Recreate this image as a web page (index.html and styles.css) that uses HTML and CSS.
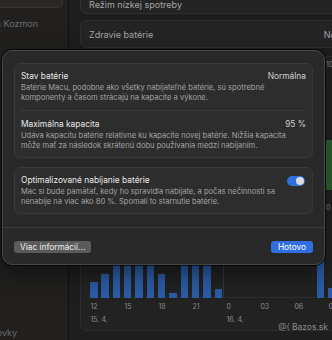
FILE: index.html
```html
<!DOCTYPE html>
<html lang="sk">
<head>
    <meta charset="UTF-8">
    <meta name="viewport" content="width=device-width, initial-scale=1.0">
    <link rel="stylesheet" href="styles.css">
    <title>Zdravie batérie</title>
</head>
<body>
    <div class="window">
        <aside class="sidebar">
            <div class="side-search"></div>
            <div class="side-user"><span>Lukáš Kozmon</span></div>
            <div class="side-bottom"><span>Šetrič obrazovky</span></div>
        </aside>

        <main class="main">
            <div class="row row-top"><span>Režim nízkej spotreby</span></div>
            <div class="row row-health"><span>Zdravie batérie</span><span>Normálna</span></div>

            <div class="charts">
                <div class="level">
                    <div class="level-plot"></div>
                    <div class="level-axis">
                        <span>100 %</span>
                        <div class="level-bars"></div>
                        <span class="level-zero">0 %</span>
                    </div>
                </div>

                <div class="usage">
                    <div class="slot"><div class="bar" style="height: 16px"></div></div>
                    <div class="slot"><div class="bar" style="height: 24px"></div></div>
                    <div class="slot"><div class="bar" style="height: 48px"></div></div>
                    <div class="slot"><div class="bar" style="height: 50px"></div></div>
                    <div class="slot"><div class="bar" style="height: 52px"></div></div>
                    <div class="slot"><div class="bar" style="height: 46px"></div></div>
                    <div class="slot"><div class="bar" style="height: 24px"></div></div>
                    <div class="slot"><div class="bar" style="height: 5px"></div></div>
                    <div class="slot"><div class="bar" style="height: 50px"></div></div>
                    <div class="slot"><div class="bar" style="height: 48px"></div></div>
                    <div class="slot"><div class="bar" style="height: 50px"></div></div>
                    <div class="slot"><div class="bar" style="height: 9px"></div></div>
                    <div class="slot day"></div>
                    <div class="slot"></div>
                    <div class="slot"></div>
                    <div class="slot"></div>
                    <div class="slot"></div>
                    <div class="slot"></div>
                    <div class="slot"></div>
                    <div class="slot"></div>
                    <div class="slot"><div class="bar" style="height: 44px"></div></div>
                    <div class="slot"><div class="bar" style="height: 10px"></div></div>
                    <div class="slot"><div class="bar" style="height: 30px"></div></div>
                    <div class="slot"><div class="bar" style="height: 20px"></div></div>

                    <span class="hour">12</span>
                    <span class="hour">15</span>
                    <span class="hour">18</span>
                    <span class="hour">21</span>
                    <span class="hour">0</span>
                    <span class="hour">03</span>
                    <span class="hour">06</span>
                    <span class="hour">09</span>

                    <span class="date">15. 4.</span>
                    <span class="date">16. 4.</span>
                </div>
            </div>
        </main>
    </div>

    <div class="watermark">@( Bazos.sk</div>

    <div class="modal">
        <div class="modal-body">
            <section class="group">
                <div class="item">
                    <div class="item-head">
                        <span class="item-title">Stav batérie</span>
                        <span class="item-value">Normálna</span>
                    </div>
                    <p class="item-desc">Batérie Macu, podobne ako všetky nabíjateľné batérie, sú spotrebné komponenty a časom strácajú na kapacite a výkone.</p>
                </div>
                <div class="item">
                    <div class="item-head">
                        <span class="item-title">Maximálna kapacita</span>
                        <span class="item-value">95 %</span>
                    </div>
                    <p class="item-desc">Udáva kapacitu batérie relatívne ku kapacite novej batérie. Nižšia kapacita môže mať za následok skrátenú dobu používania medzi nabíjaním.</p>
                </div>
            </section>

            <section class="group">
                <div class="item">
                    <div class="item-head">
                        <span class="item-title">Optimalizované nabíjanie batérie</span>
                        <span class="toggle"></span>
                    </div>
                    <p class="item-desc">Mac si bude pamätať, kedy ho spravidla nabíjate, a počas nečinnosti sa nenabije na viac ako 80 %. Spomalí to starnutie batérie.</p>
                </div>
            </section>
        </div>

        <div class="modal-foot">
            <button class="btn">Viac informácií...</button>
            <button class="btn btn-primary">Hotovo</button>
        </div>
    </div>
</body>
</html>
```

FILE: styles.css
```css
* {
    box-sizing: border-box;
}

body {
    margin: 0;
    width: 332px;
    height: 340px;
    overflow: hidden;
    position: relative;
    background: #1e1e1e;
    font-family: Inter, "Liberation Sans", sans-serif;
    color: #e6e6e6;
}

.window {
    display: flex;
    height: 340px;
}

/* sidebar */

.sidebar {
    width: 69px;
    flex: none;
    display: flex;
    flex-direction: column;
    background: #21201f;
    border-right: 1px solid #111;
}

.side-search {
    width: 73px;
    height: 14px;
    margin: -6px 0 0 -10px;
    background: #2a2927;
    border: 1px solid #363533;
    border-radius: 5px;
}

.side-user,
.side-bottom {
    display: flex;
    justify-content: flex-end;
    white-space: nowrap;
    font-size: 9px;
    line-height: 10px;
    color: #6c6c6c;
}

.side-user {
    width: 38px;
    margin-top: 11px;
}

.side-bottom {
    width: 17px;
    margin-top: auto;
    margin-bottom: 2px;
}

/* main */

.main {
    flex: 1;
    display: flex;
    flex-direction: column;
    padding-left: 11px;
    overflow: hidden;
}

.row {
    width: 294px;
    flex: none;
    display: flex;
    justify-content: space-between;
    padding: 0 8px;
    background: #242424;
    border: 1px solid #2f2f2f;
    border-radius: 6px;
    font-size: 9px;
    line-height: 11px;
    color: #a5a5a5;
}

.row-top {
    height: 26px;
    margin-top: -12px;
    padding-top: 10px;
}

.row-health {
    height: 28px;
    margin-top: 6px;
    align-items: center;
}

.charts {
    width: 294px;
    height: 275px;
    flex: none;
    margin-top: 8px;
    display: flex;
    flex-direction: column;
    background: #222;
    border: 1px solid #2d2d2d;
    border-radius: 6px;
}

.level {
    height: 170px;
    display: flex;
}

.level-plot {
    width: 245px;
    flex: none;
}

.level-axis {
    display: flex;
    flex-direction: column;
    padding-top: 3px;
    font-size: 7px;
    line-height: 10px;
    color: #8a8a8a;
    white-space: nowrap;
}

.level-bars {
    width: 12px;
    height: 50px;
    margin-top: 70px;
    background: #2c6633;
}

.level-zero {
    margin-top: 13px;
}

.usage {
    display: grid;
    grid-template-columns: repeat(24, 11.333px);
    grid-template-rows: 60px 14px 14px;
    padding: 11px 0 4px 7px;
}

.slot {
    display: flex;
    align-items: flex-end;
    background: linear-gradient(#2e2e2e, #2e2e2e) bottom / 100% 1px no-repeat;
}

.slot.day {
    box-shadow: -1px 0 0 #383838;
}

.bar {
    width: 7.5px;
    margin-left: 2px;
    background: #2b5ca6;
}

.hour,
.date {
    font-size: 7px;
    line-height: 10px;
    color: #8a8a8a;
    padding-left: 2.5px;
}

.hour {
    grid-column: span 3;
    padding-top: 4px;
}

.date {
    grid-column: span 12;
    padding-top: 3px;
}

.watermark {
    position: absolute;
    right: 4px;
    bottom: 8px;
    font-size: 8.5px;
    color: #8c8c8c;
}

/* sheet */

.modal {
    position: absolute;
    left: 2px;
    top: 50px;
    width: 323px;
    height: 215px;
    display: flex;
    flex-direction: column;
    background: #292929;
    border: 1px solid #464646;
    border-radius: 10px;
    box-shadow: 0 0 0 1px rgba(0, 0, 0, 0.6), 0 8px 24px rgba(0, 0, 0, 0.5);
}

.modal-body {
    padding: 12px 11px 13px;
}

.group {
    padding: 0 6px;
    background: #2d2d2d;
    border: 1px solid #3a3a3a;
    border-radius: 6px;
}

.group + .group {
    margin-top: 9px;
}

.item {
    padding: 7px 0;
}

.item:last-child {
    padding-bottom: 6px;
}

.item + .item {
    padding-top: 8px;
    border-top: 1px solid #3a3a3a;
}

.item-head {
    display: flex;
    justify-content: space-between;
    align-items: center;
}

.item-title,
.item-value {
    font-size: 8.4px;
    line-height: 11px;
}

.item-title {
    color: #e8e8e8;
}

.item-value {
    color: #cfcfcf;
}

.item-desc {
    max-width: 266px;
    margin: 1px 0 0;
    font-size: 7.55px;
    line-height: 10px;
    color: #a3a3a3;
}

.toggle {
    position: relative;
    width: 18px;
    height: 10px;
    margin-right: 1px;
    background: #2f6fde;
    border-radius: 5px;
}

.toggle::after {
    content: "";
    position: absolute;
    right: 1px;
    top: 1px;
    width: 8px;
    height: 8px;
    background: #dcdcdc;
    border-radius: 50%;
}

.modal-foot {
    display: flex;
    justify-content: space-between;
    padding: 13px 11px 0;
    border-top: 1px solid #3a3a3a;
}

.btn {
    height: 12px;
    padding: 0 6px;
    border: 0;
    border-radius: 3px;
    background: #5b5b5b;
    color: #ececec;
    font-family: inherit;
    font-size: 8.3px;
    line-height: 12px;
}

.btn-primary {
    padding: 0 7px;
    background: #2f6fdf;
    color: #fff;
}
```
